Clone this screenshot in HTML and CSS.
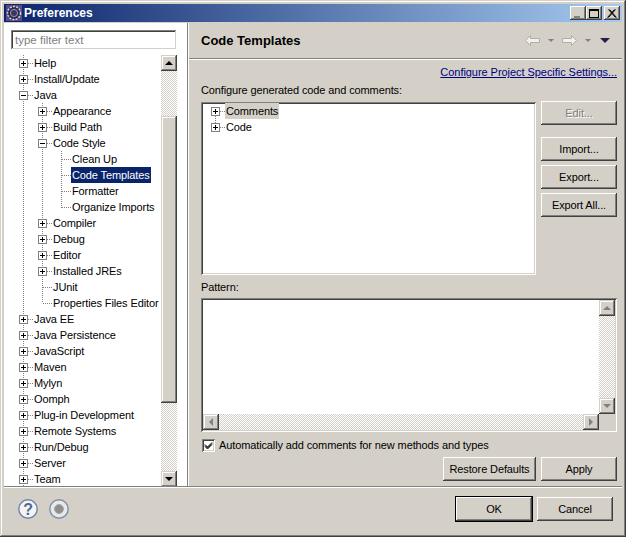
FILE: index.html
```html
<!DOCTYPE html>
<html lang="en">
<head>
<meta charset="utf-8">
<title>Preferences</title>
<link rel="stylesheet" href="styles.css">
</head>
<body>
<div class="window">
  <header class="titlebar">
    <svg class="appicon" width="16" height="16" viewBox="0 0 16 16"><rect width="16" height="16" fill="#5a4a86"/><circle cx="8" cy="8" r="6.5" fill="#2c2a48"/><circle cx="8" cy="8" r="6.5" fill="none" stroke="#d8d8e8" stroke-width="1.4" stroke-dasharray="2 1.2"/><circle cx="8" cy="8" r="3.6" fill="#3a3660" stroke="#9a98b8"/></svg>
    <span class="title">Preferences</span>
    <div class="winbtns">
      <button class="winbtn"><span class="g-min"></span></button>
      <button class="winbtn"><span class="g-max"></span></button>
      <button class="winbtn close"><svg width="10" height="9" viewBox="0 0 10 9"><path d="M1.5 0.5L8.5 8.5M2.5 0.5L9.5 8.5M8.5 0.5L1.5 8.5M7.5 0.5L0.5 8.5" stroke="#000" fill="none"/></svg></button>
    </div>
  </header>
  <div class="main">
    <aside class="sidebar">
      <div class="filter"><input class="filter-input" type="text" placeholder="type filter text"></div>
      <div class="treewrap">
        <div class="tree">
          <i class="guide g0"></i><i class="guide g1"></i><i class="guide g2"></i>
          <div class="row l0"><b class="exp plus"></b><span class="label">Help</span></div>
          <div class="row l0"><b class="exp plus"></b><span class="label">Install/Update</span></div>
          <div class="row l0"><b class="exp"></b><span class="label">Java</span></div>
          <div class="row l1"><b class="exp plus"></b><span class="label">Appearance</span></div>
          <div class="row l1"><b class="exp plus"></b><span class="label">Build Path</span></div>
          <div class="row l1"><b class="exp"></b><span class="label">Code Style</span></div>
          <div class="row l2"><span class="label">Clean Up</span></div>
          <div class="row l2"><span class="label selected">Code Templates</span></div>
          <div class="row l2"><span class="label">Formatter</span></div>
          <div class="row l2"><span class="label">Organize Imports</span></div>
          <div class="row l1"><b class="exp plus"></b><span class="label">Compiler</span></div>
          <div class="row l1"><b class="exp plus"></b><span class="label">Debug</span></div>
          <div class="row l1"><b class="exp plus"></b><span class="label">Editor</span></div>
          <div class="row l1"><b class="exp plus"></b><span class="label">Installed JREs</span></div>
          <div class="row l1 leaf"><span class="label">JUnit</span></div>
          <div class="row l1 leaf"><span class="label">Properties Files Editor</span></div>
          <div class="row l0"><b class="exp plus"></b><span class="label">Java EE</span></div>
          <div class="row l0"><b class="exp plus"></b><span class="label">Java Persistence</span></div>
          <div class="row l0"><b class="exp plus"></b><span class="label">JavaScript</span></div>
          <div class="row l0"><b class="exp plus"></b><span class="label">Maven</span></div>
          <div class="row l0"><b class="exp plus"></b><span class="label">Mylyn</span></div>
          <div class="row l0"><b class="exp plus"></b><span class="label">Oomph</span></div>
          <div class="row l0"><b class="exp plus"></b><span class="label">Plug-in Development</span></div>
          <div class="row l0"><b class="exp plus"></b><span class="label">Remote Systems</span></div>
          <div class="row l0"><b class="exp plus"></b><span class="label">Run/Debug</span></div>
          <div class="row l0"><b class="exp plus"></b><span class="label">Server</span></div>
          <div class="row l0"><b class="exp plus"></b><span class="label">Team</span></div>
        </div>
        <div class="vscroll">
          <span class="sbtn"><i class="arr up"></i></span>
          <span class="trk pre-left"></span>
          <span class="sbtn thumb-left"></span>
          <span class="trk fill"></span>
          <span class="sbtn"><i class="arr down"></i></span>
        </div>
      </div>
    </aside>
    <section class="content">
      <div class="pagehead">
        <h1 class="pagetitle">Code Templates</h1>
        <div class="navicons">
          <svg class="nav-back" width="15" height="11" viewBox="0 0 15 11"><path d="M0.5 5.5L5.5 0.5V3.5H14.5V7.5H5.5V10.5Z" fill="#f2f0ec" stroke="#b0aea8"/></svg>
          <i class="tri small t1"></i>
          <svg class="nav-fwd" width="15" height="11" viewBox="0 0 15 11"><path d="M14.5 5.5L9.5 0.5V3.5H0.5V7.5H9.5V10.5Z" fill="#f2f0ec" stroke="#b0aea8"/></svg>
          <i class="tri small t2"></i>
          <i class="tri big"></i>
        </div>
      </div>
      <div class="pagebody">
        <div class="linkrow"><a class="link" href="#">Configure Project Specific Settings...</a></div>
        <div class="cfg-label">Configure generated code and comments:</div>
        <div class="cfg">
          <div class="listbox">
            <i class="guide gc"></i>
            <div class="row lc"><b class="exp plus"></b><span class="label focused">Comments</span></div>
            <div class="row lc"><b class="exp plus"></b><span class="label">Code</span></div>
          </div>
          <div class="sidebtns">
            <button class="btn" disabled>Edit...</button>
            <button class="btn gap">Import...</button>
            <button class="btn">Export...</button>
            <button class="btn">Export All...</button>
          </div>
        </div>
        <div class="pat-label">Pattern:</div>
        <div class="pattern">
          <div class="pat-top">
            <div class="pat-text"></div>
            <div class="vscroll dis">
              <span class="sbtn"><i class="arr up"></i></span>
              <span class="trk fill"></span>
              <span class="sbtn"><i class="arr down"></i></span>
            </div>
          </div>
          <div class="hscroll">
            <span class="sbtn"><i class="arr left"></i></span>
            <span class="trk fill"></span>
            <span class="sbtn"><i class="arr right"></i></span>
            <span class="corner"></span>
          </div>
        </div>
        <label class="check"><span class="box"><svg width="9" height="9" viewBox="0 0 9 9"><path d="M1 3.5L3.5 6L8 1.5M1 4.5L3.5 7L8 2.5M1 5.5L3.5 8L8 3.5" stroke="#000" fill="none"/></svg></span>Automatically add comments for new methods and types</label>
        <div class="actions">
          <button class="btn wide">Restore Defaults</button>
          <button class="btn">Apply</button>
        </div>
      </div>
    </section>
  </div>
  <footer class="footer">
    <div class="helpicons">
      <svg width="22" height="22" viewBox="0 0 22 22"><circle cx="11" cy="11" r="9.2" fill="#f4f4f6" stroke="#6f84a8" stroke-width="1.4"/><text x="11" y="16.5" text-anchor="middle" class="qmark">?</text></svg>
      <svg width="22" height="22" viewBox="0 0 22 22"><circle cx="11" cy="11" r="9.2" fill="#e8e8ea" stroke="#7c8ea8" stroke-width="1.4"/><circle cx="11" cy="11" r="4.5" fill="#8e8e8e" stroke="#a8a8a8"/></svg>
    </div>
    <div class="dlgbtns">
      <button class="btn default">OK</button>
      <button class="btn">Cancel</button>
    </div>
  </footer>
</div>
</body>
</html>
```
FILE: styles.css
```css
* { box-sizing: border-box; }
html, body { margin: 0; padding: 0; }
body {
  width: 626px; height: 537px; overflow: hidden;
  font-family: "Liberation Sans", Arial, sans-serif;
  font-size: 11px; letter-spacing: -0.12px; color: #000;
  background: #d4d0c8;
}
.window {
  width: 626px; height: 537px;
  padding: 4px;
  display: flex; flex-direction: column;
  background: #d4d0c8;
  box-shadow: inset -1px -1px 0 #404040, inset 1px 1px 0 #d4d0c8, inset -2px -2px 0 #808080, inset 2px 2px 0 #fff;
}
.titlebar {
  height: 18px; flex: none;
  display: flex; align-items: center;
  padding: 0 2px 0 2px;
  background: linear-gradient(90deg, #0a246a, #a6caf0);
}
.appicon { flex: none; }
.title { margin-left: 2px; color: #fff; font-weight: 700; font-size: 12px; letter-spacing: 0; }
.winbtns { margin-left: auto; display: flex; }
.winbtn {
  width: 16px; height: 14px; padding: 0; margin: 0;
  display: flex; align-items: center; justify-content: center;
  background: #d4d0c8; border: 0;
  box-shadow: inset -1px -1px 0 #404040, inset 1px 1px 0 #fff, inset -2px -2px 0 #808080;
}
.winbtn.close { margin-left: 2px; }
.g-min { width: 6px; height: 2px; background: #808080; margin: 7px 3px 0 0; }
.g-max { width: 10px; height: 9px; border: 1px solid #000; border-top-width: 2px; }
.main { flex: none; height: 464px; display: flex; margin-top: 1px; }
.sidebar { width: 183px; flex: none; background: #fff; padding: 7px 0 0 7px; display: flex; flex-direction: column; }
.filter { height: 19px; width: 165px; flex: none; }
.filter-input {
  display: block; width: 100%; height: 100%; padding: 0 0 0 4px; margin: 0;
  font: inherit; font-size: 11.5px; letter-spacing: 0; background: #fff; border: 0;
  box-shadow: inset 1px 1px 0 #808080, inset -1px -1px 0 #d4d0c8, inset 2px 2px 0 #404040;
}
.filter-input::placeholder { color: #808080; opacity: 1; }
.treewrap { flex: 1; min-height: 0; display: flex; margin: 6px 0 0 -7px; padding-right: 10px; }
.tree { flex: 1; position: relative; overflow: hidden; }
.row { height: 16px; display: flex; align-items: center; white-space: nowrap; position: relative; }
.label { height: 16px; line-height: 16px; padding: 0 1px; color: #000; }
.selected { background: #0a246a; color: #fff; }
.focused { background: #d4d0c8; }
.exp {
  display: block; flex: none; width: 9px; height: 9px; position: relative; z-index: 1;
  background: #fff; border: 1px solid #808080; margin-right: 5px;
}
.exp::before { content: ""; position: absolute; left: 1px; top: 3px; width: 5px; height: 1px; background: #000; }
.exp.plus::after { content: ""; position: absolute; left: 3px; top: 1px; width: 1px; height: 5px; background: #000; }
.row.l0 { padding-left: 15px; }
.row.l1 { padding-left: 34px; }
.row.l2 { padding-left: 67px; }
.row.lc { padding-left: 10px; }
.row.l0::after, .row.l1::after, .row.l2::after, .row.lc::after {
  content: ""; position: absolute; top: 8px; height: 1px;
  background-image: repeating-linear-gradient(90deg, #808080 0 1px, transparent 1px 2px);
}
.row.l0::after { left: 24px; width: 5px; }
.row.l1::after { left: 43px; width: 5px; }
.row.l1.leaf { padding-left: 48px; }
.row.l1.leaf::after { left: 39px; width: 9px; }
.row.l2::after { left: 58px; width: 9px; }
.row.lc::after { left: 19px; width: 5px; }
.guide {
  position: absolute; width: 1px;
  background-image: repeating-linear-gradient(180deg, #808080 0 1px, transparent 1px 2px);
}
.g0 { left: 19px; top: 0; bottom: 0; }
.g1 { left: 38px; top: 48px; height: 200px; }
.g2 { left: 57px; top: 96px; height: 57px; }
.gc { left: 14px; top: 8px; height: 16px; }
.vscroll { width: 16px; flex: none; display: flex; flex-direction: column; }
.sbtn {
  display: flex; align-items: center; justify-content: center;
  width: 16px; height: 16px; flex: none; background: #d4d0c8;
  box-shadow: inset -1px -1px 0 #404040, inset 1px 1px 0 #d4d0c8, inset -2px -2px 0 #808080, inset 2px 2px 0 #fff;
}
.trk {
  display: block; flex: 1; min-height: 0; min-width: 0;
  background: conic-gradient(#fff 25%, #d4d0c8 0 50%, #fff 0 75%, #d4d0c8 0) 0 0 / 2px 2px;
}
.pre-left { flex: none; height: 45px; }
.thumb-left { height: 287px; }
.arr { display: block; width: 0; height: 0; border: 0 solid transparent; }
.arr.up { border-width: 0 4px 4px; border-bottom-color: #000; }
.arr.down { border-width: 4px 4px 0; border-top-color: #000; }
.arr.left { border-width: 4px 4px 4px 0; border-right-color: #808080; }
.arr.right { border-width: 4px 0 4px 4px; border-left-color: #808080; }
.dis .arr.up { border-bottom-color: #808080; }
.dis .arr.down { border-top-color: #808080; }
.content { flex: 1; min-width: 0; display: flex; flex-direction: column; box-shadow: inset 1px 0 0 #808080, inset 2px 0 0 #fff; }
.pagehead {
  height: 36px; flex: none; margin-left: 2px;
  display: flex; align-items: center; justify-content: space-between;
  padding: 0 12px 0 12px; border-bottom: 1px solid #808080; box-shadow: 0 1px 0 #fff;
}
.pagetitle { margin: 0; font-size: 13px; font-weight: 700; letter-spacing: 0; color: #000; line-height: 16px; }
.navicons { display: flex; align-items: center; }
.nav-fwd { margin-left: 8px; }
.tri { display: block; width: 0; height: 0; border-style: solid; border-color: transparent; }
.tri.small { border-width: 3px 3px 0; border-top-color: #808080; margin-left: 8px; }
.tri.big { border-width: 5px 5px 0; border-top-color: #2a1a50; margin-left: 9px; }
.pagebody { flex: 1; min-height: 0; padding: 0 5px 0 12px; margin-left: 2px; display: flex; flex-direction: column; }
.linkrow { display: flex; justify-content: flex-end; margin-top: 5px; height: 16px; line-height: 16px; }
.link { color: #00007f; text-decoration: underline; letter-spacing: -0.05px; }
.cfg-label { height: 16px; line-height: 16px; margin-top: 2px; }
.cfg { display: flex; margin-top: 4px; height: 173px; flex: none; }
.listbox {
  width: 335px; flex: none; background: #fff; padding: 1px 0 0; position: relative;
  box-shadow: inset 1px 1px 0 #808080, inset -1px -1px 0 #fff, inset 2px 2px 0 #404040, inset -2px -2px 0 #d4d0c8;
}
.sidebtns { margin: -1px 0 0 5px; display: flex; flex-direction: column; gap: 4px; }
.btn {
  display: block; width: 76px; height: 24px; padding: 0; margin: 0;
  font: inherit; letter-spacing: inherit; color: #000; background: #d4d0c8; border: 0;
  box-shadow: inset -1px -1px 0 #404040, inset 1px 1px 0 #fff, inset -2px -2px 0 #808080;
}
.btn.gap { margin-top: 8px; }
.btn:disabled { color: #808080; text-shadow: 1px 1px 0 #fff; }
.btn.wide { width: 93px; }
.btn.default { box-shadow: 0 0 0 1px #000, inset -1px -1px 0 #404040, inset 1px 1px 0 #fff, inset -2px -2px 0 #808080; }
.pat-label { height: 16px; line-height: 16px; margin-top: 4px; }
.pattern {
  height: 134px; flex: none; margin-top: 3px; padding: 2px; background: #fff;
  display: flex; flex-direction: column;
  box-shadow: inset 1px 1px 0 #808080, inset -1px -1px 0 #fff, inset 2px 2px 0 #404040, inset -2px -2px 0 #d4d0c8;
}
.pat-top { flex: 1; min-height: 0; display: flex; }
.pat-text { flex: 1; }
.hscroll { height: 16px; flex: none; display: flex; }
.corner { width: 16px; flex: none; background: #d4d0c8; }
.check { display: flex; align-items: center; height: 16px; margin-top: 5px; padding-left: 1px; }
.box {
  width: 13px; height: 13px; flex: none; margin-right: 4px; background: #fff;
  display: flex; align-items: center; justify-content: center;
  box-shadow: inset 1px 1px 0 #808080, inset -1px -1px 0 #fff, inset 2px 2px 0 #404040, inset -2px -2px 0 #d4d0c8;
}
.actions { display: flex; justify-content: flex-end; gap: 5px; margin-top: 4px; }
.footer {
  flex: 1; min-height: 0; display: flex; align-items: center; justify-content: space-between;
  padding: 0 9px 3px 13px; border-top: 1px solid #fff;
  box-shadow: 0 -1px 0 #808080;
}
.helpicons { display: flex; gap: 9px; }
.qmark { font-family: "Liberation Sans", sans-serif; font-size: 16px; font-weight: 700; fill: #52688e; }
.dlgbtns { display: flex; gap: 5px; }
```
